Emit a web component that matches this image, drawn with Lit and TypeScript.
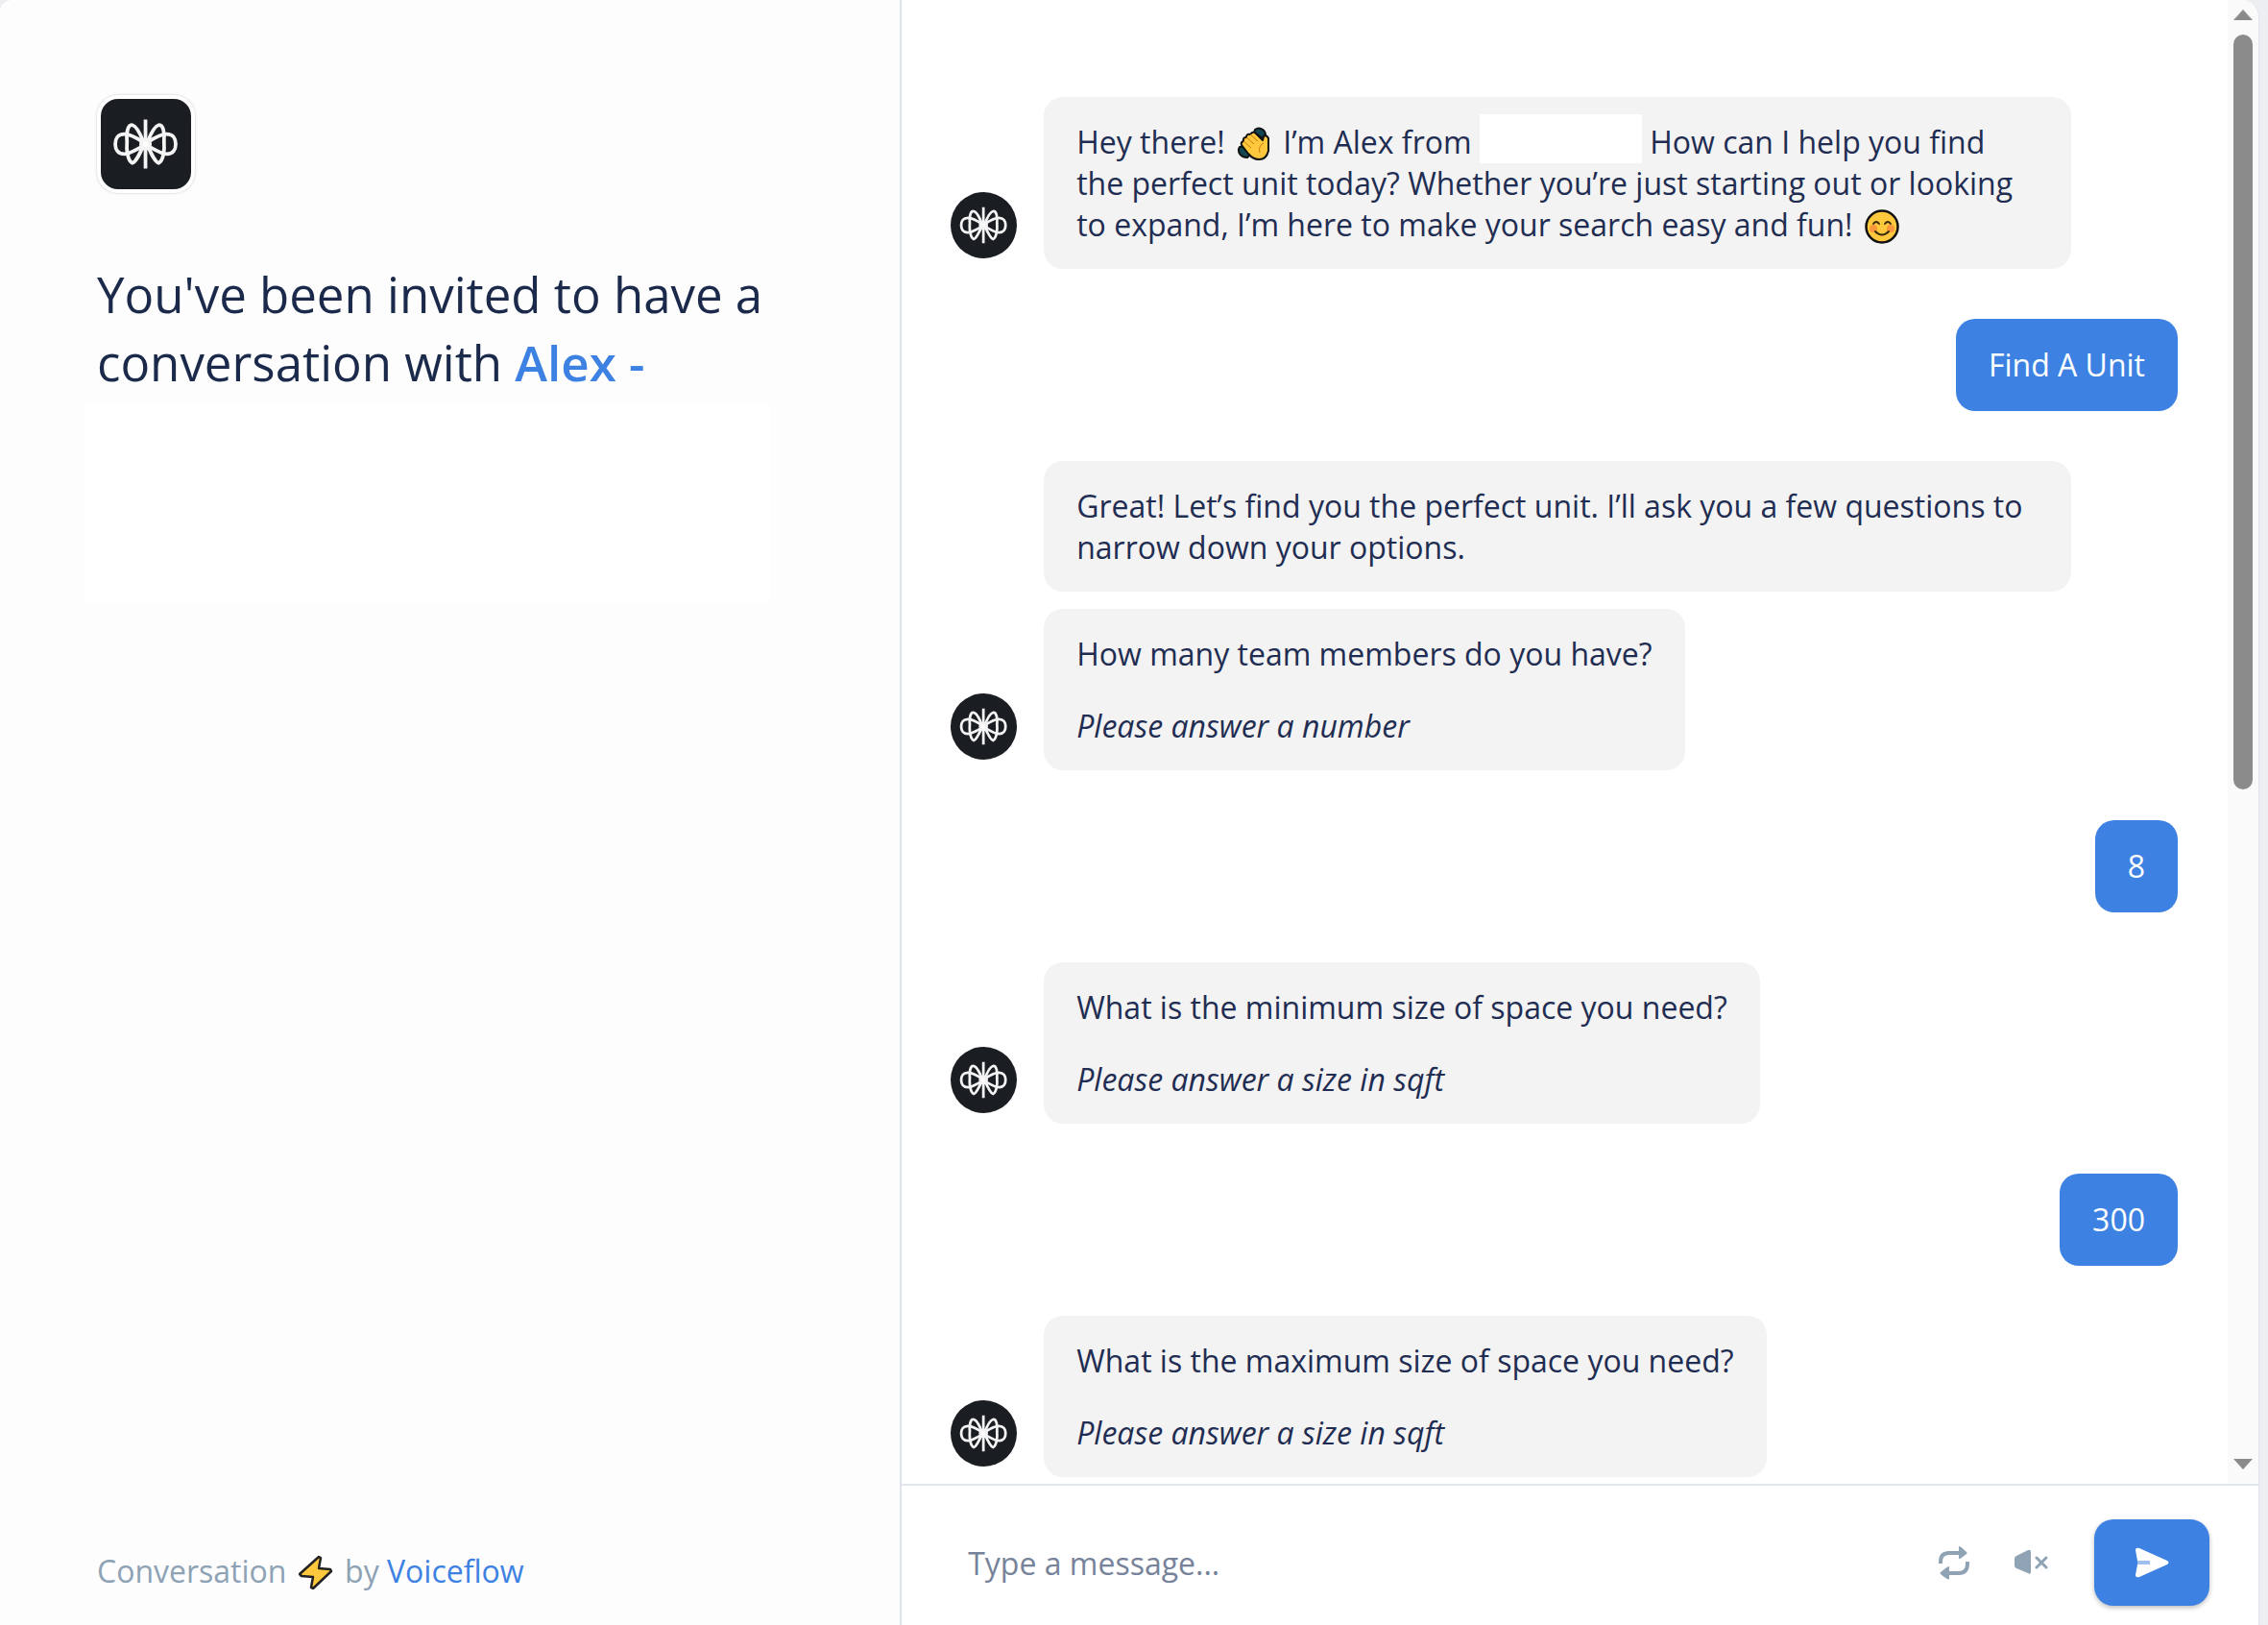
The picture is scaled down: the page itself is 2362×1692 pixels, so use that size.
import { LitElement, html, css, svg, nothing } from "lit";
import { customElement, property } from "lit/decorators.js";

type Message =
  | { from: "bot"; bubbles: Array<{ text: unknown; hint?: string }> }
  | { from: "user"; text: string };

@customElement("brand-mark")
class BrandMark extends LitElement {
  static styles = css`
    :host { display: block; background: #1a1e23; }
    .mark { display: block; width: 100%; height: 100%; }
  `;
  render() {
    const wing = svg`
      <path d="M47 47 C43 37 39 30 35 29 C30 28 28 37 29 47 C28 57 30 69 35 71 C39 70 43 61 47 52" />
      <path d="M47 48 C38 42 32 39 26 39 C19 39 16 44 16 50 C16 56 19 61 26 61 C32 61 38 57 47 52" />
    `;
    return html`
      <svg class="mark" viewBox="0 0 100 100" fill="none" stroke="#f4f4f4" stroke-width="4" aria-hidden="true">
        ${wing}
        <g transform="translate(99 0) scale(-1 1)">${wing}</g>
        <path d="M49.500 23 V77" stroke-width="4" />
        <circle cx="49.500" cy="50" r="5" fill="#fff" />
      </svg>
    `;
  }
}

const clap = html`
  <svg class="emoji" viewBox="0 0 36 36" role="img" aria-label="Waving hand">
    <path d="M19 3 C23 0 29 2 30 8 L27 12 L18 6 Z" fill="#124652" stroke="#111" stroke-width="2" />
    <path d="M3 21 C0 26 4 32 11 32 L14 29 L7 20 Z" fill="#124652" stroke="#111" stroke-width="2" />
    <path d="M5 19 Q4 16 7 15 Q6 11 10 11 Q10 7 14 8 Q17 4 20 7 L27 14 L28 10 Q31 8 33 12 V25 Q31 34 23 34 Q17 34 12 28 Z" fill="#ffc83d" stroke="#111" stroke-width="2" stroke-linejoin="round" />
    <path d="M7 15 L15 22 M10 11 L18 18 M14 8 L22 15 M28 17 Q22 20 24 27" fill="none" stroke="#c77a10" stroke-width="1" />
  </svg>
`;

const smile = html`
  <svg class="emoji" viewBox="0 0 36 36" role="img" aria-label="Smiling face">
    <circle cx="18" cy="18" r="16.500" fill="#ffc83d" stroke="#111" stroke-width="2.500" />
    <circle cx="9" cy="20" r="4" fill="#f8803c" opacity=".7" />
    <circle cx="27" cy="20" r="4" fill="#f8803c" opacity=".7" />
    <path d="M9 15 Q12 11 15 15 M21 15 Q24 11 27 15 M11 23 Q18 30 25 23" fill="none" stroke="#3a2a10" stroke-width="2" stroke-linecap="round" />
  </svg>
`;

const bolt = html`
  <svg class="emoji" viewBox="0 0 36 36" role="img" aria-label="Lightning">
    <path d="M21 2 L1 20 L3 22 L15 23 L13 34 L15 35 L34 17 L33 15 L21 14 L23 3 Z" fill="#ffc83d" stroke="#222" stroke-width="2.500" stroke-linejoin="round" />
  </svg>
`;

const messages: Message[] = [
  {
    from: "bot",
    bubbles: [
      {
        text: html`Hey there! ${clap} I’m Alex from <span class="blank"></span> How can I help you find
          the perfect unit today? Whether you’re just starting out or looking to expand, I’m here to
          make your search easy and fun! ${smile}`,
      },
    ],
  },
  { from: "user", text: "Find A Unit" },
  {
    from: "bot",
    bubbles: [
      { text: "Great! Let’s find you the perfect unit. I’ll ask you a few questions to narrow down your options." },
      { text: "How many team members do you have?", hint: "Please answer a number" },
    ],
  },
  { from: "user", text: "8" },
  { from: "bot", bubbles: [{ text: "What is the minimum size of space you need?", hint: "Please answer a size in sqft" }] },
  { from: "user", text: "300" },
  { from: "bot", bubbles: [{ text: "What is the maximum size of space you need?", hint: "Please answer a size in sqft" }] },
];

@customElement("chat-turn")
class ChatTurn extends LitElement {
  @property({ attribute: false }) message!: Message;

  static styles = css`
    :host { display: flex; align-items: flex-end; gap: 28px; }
    .avatar { flex: none; width: 69px; height: 69px; margin-bottom: 11px; border-radius: 50%; overflow: hidden; }
    .stack { display: flex; flex-direction: column; align-items: flex-start; gap: 18px; max-width: 1070px; }
    .bubble { box-sizing: border-box; padding: 25px 34px; border-radius: 20px; background: #f3f3f3; }
    .line { margin: 0; }
    .hint { margin: 32px 0 0; font-style: italic; }
    .mine { margin: 0 0 0 auto; padding: 26px 34px 27px; border-radius: 20px; background: #3d82e2; color: #fff; }
    .emoji { width: 36px; height: 36px; margin: 0 4px; vertical-align: -8px; }
    .blank { display: inline-block; width: 169px; height: 51px; margin: -12px 0; vertical-align: 2px; background: #fff; }
  `;

  render() {
    const m = this.message;
    if (m.from === "user") return html`<p class="mine">${m.text}</p>`;
    return html`
      <brand-mark class="avatar"></brand-mark>
      <div class="stack">
        ${m.bubbles.map(
          (b) => html`
            <div class="bubble">
              <p class="line">${b.text}</p>
              ${b.hint ? html`<p class="hint">${b.hint}</p>` : nothing}
            </div>
          `,
        )}
      </div>
    `;
  }
}

@customElement("app-root")
class AppRoot extends LitElement {
  static styles = css`
    :host {
      display: flex;
      box-sizing: border-box;
      height: 100vh;
      padding-right: 9px;
      background: #edeef2;
      color: #1f2d52;
      font: 32px/43px "Open Sans", "Noto Sans", sans-serif;
    }
    .side { display: flex; flex-direction: column; box-sizing: border-box; flex: 0 0 calc(40% - 2px); padding: 99px 101px 35px; border-right: 2px solid #dfe3ed; border-top-left-radius: 12px; background: #fdfdfd; }
    .logo { box-sizing: border-box; width: 102px; height: 102px; border: 4px solid #fff; border-radius: 22px; overflow: hidden; box-shadow: 0 0 3px #0003; }
    .title { margin: 70px -20px 0 0; font-size: 51px; line-height: 71px; font-weight: 400; color: #1b2a4a; }
    .name { color: #3d82e2; font-weight: 600; }
    .cover { height: 204px; margin: 9px 34px 0 -14px; background: #fff; }
    .credit { margin: auto 0 0; color: #8da2b5; }
    .link { color: #3d82e2; text-decoration: none; }
    .emoji { width: 36px; height: 36px; margin: 0 4px; vertical-align: -7px; }
    .chat { display: flex; flex-direction: column; box-sizing: border-box; flex: 1; min-width: 0; border-right: 1px solid #dfe3ed; border-top-right-radius: 18px; overflow: hidden; background: #fff; }
    .view { display: flex; flex: 1; min-height: 0; border-bottom: 2px solid #e1e5f0; }
    .log { display: flex; flex-direction: column; flex: 1; gap: 52px; padding: 101px 52px 0 51px; overflow: hidden; }
    .turn { flex: none; }
    .bar { display: flex; flex-direction: column; align-items: center; justify-content: space-between; box-sizing: border-box; width: 32px; padding: 10px 0 15px; background: #fafafa; }
    .arrow { display: block; width: 20px; height: 11px; fill: #8b8b8b; }
    .thumb { width: 20px; height: 786px; margin: 15px 0 auto; border-radius: 10px; background: #8b8b8b; }
    .composer { display: flex; align-items: center; box-sizing: border-box; height: 145px; padding: 15px 51px 0 69px; }
    .field { flex: 1; min-width: 0; height: 60px; padding: 0; border: 0; outline: 0; background: none; color: inherit; font: inherit; }
    .field::placeholder { color: #77839a; opacity: 1; }
    .tool { display: flex; padding: 0; border: 0; background: none; margin-right: 44px; fill: #8fa3b5; }
    .icon { display: block; width: 36px; height: 36px; }
    .send { display: flex; align-items: center; justify-content: center; width: 120px; height: 90px; margin-left: 4px; border: 0; border-radius: 20px; background: #3d82e2; box-shadow: 0 2px 5px #0004; fill: #fff; }
  `;

  render() {
    return html`
      <aside class="side">
        <brand-mark class="logo"></brand-mark>
        <h1 class="title">You've been invited to have a conversation with <span class="name">Alex -</span></h1>
        <div class="cover"></div>
        <p class="credit">Conversation ${bolt} by <a class="link" href="#voiceflow">Voiceflow</a></p>
      </aside>
      <main class="chat">
        <div class="view">
          <div class="log">
            ${messages.map((m) => html`<chat-turn class="turn" .message=${m}></chat-turn>`)}
          </div>
          <div class="bar" aria-hidden="true">
            <svg class="arrow" viewBox="0 0 20 11"><path d="M10 0 L20 11 H0 Z" /></svg>
            <div class="thumb"></div>
            <svg class="arrow" viewBox="0 0 20 11"><path d="M0 0 H20 L10 11 Z" /></svg>
          </div>
        </div>
        <form class="composer">
          <input class="field" type="text" aria-label="Message" placeholder="Type a message..." />
          <button class="tool" type="button" aria-label="Restart conversation">
            <svg class="icon" viewBox="0 0 36 36">
              <path d="M4 19 V17 Q4 8 13 8 H24 M32 17 V19 Q32 29 23 29 H12" fill="none" stroke="#8fa3b5" stroke-width="4" />
              <path d="M23 1 Q24 0 31 7 Q32 8 31 9 Q24 15 23 14 Z M13 22 Q12 21 4 28 Q3 29 4 30 Q12 37 13 35 Z" />
            </svg>
          </button>
          <button class="tool" type="button" aria-label="Unmute">
            <svg class="icon" viewBox="0 0 36 36">
              <path d="M1 14 Q1 12 3 11 L15 5 Q18 4 18 7 V28 Q18 31 15 29 L3 24 Q1 23 1 21 Z" />
              <path d="M24 13 L34 23 M34 13 L24 23" stroke="#8fa3b5" stroke-width="3" stroke-linecap="round" />
            </svg>
          </button>
          <button class="send" type="button" aria-label="Send">
            <svg class="icon" viewBox="0 0 36 36">
              <path d="M1 5 Q1 2 5 3 L34 16 Q37 18 34 20 L5 33 Q1 34 1 31 L3 20 V16 Z" />
              <path d="M3 16 H16 V20 H3 Z" fill="#9dc0f1" />
            </svg>
          </button>
        </form>
      </main>
    `;
  }
}
